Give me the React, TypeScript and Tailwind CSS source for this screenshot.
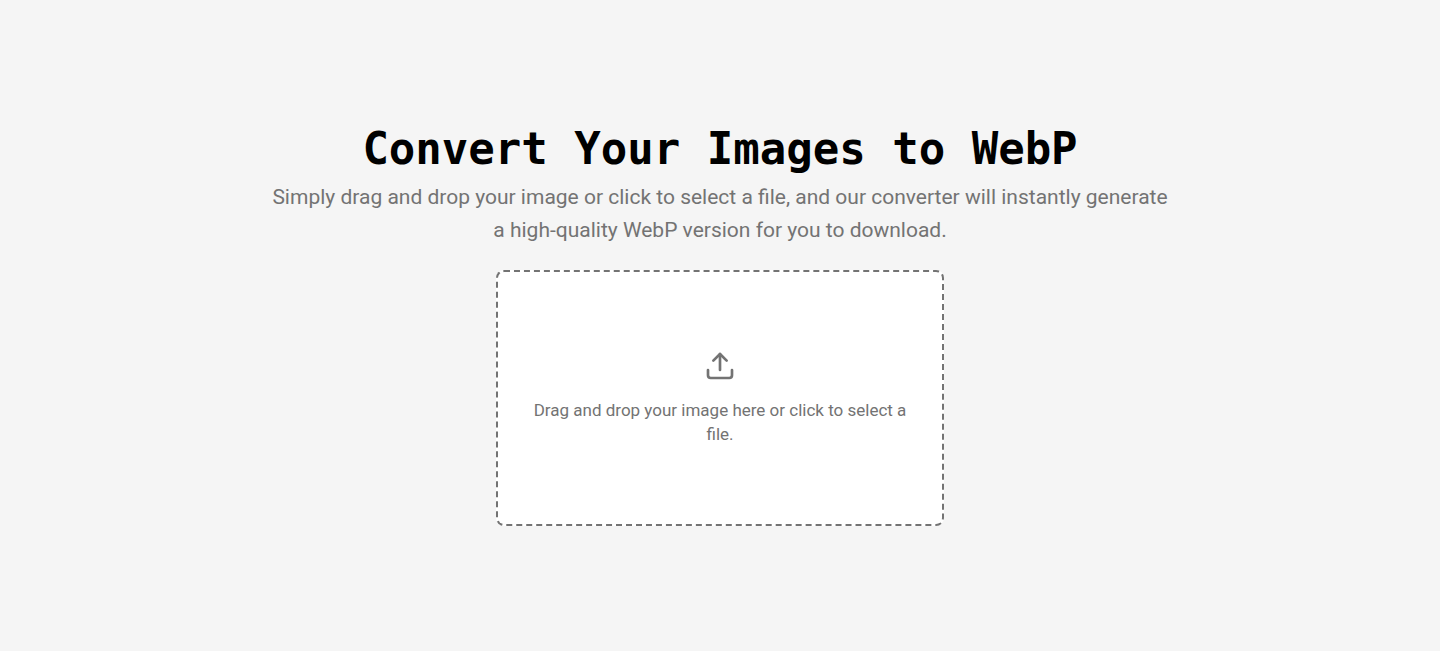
import { Upload } from "lucide-react";

export default function App() {
  return (
    <main className="flex min-h-screen flex-col items-center justify-center bg-neutral-100 px-4 text-center font-[Roboto,sans-serif] text-neutral-500">
      <h1 className="mb-2 font-['DejaVu_Sans_Mono',monospace] text-[44px] leading-[48px] font-bold text-black">
        Convert Your Images to WebP
      </h1>
      <p className="max-w-4xl text-[21px] leading-[33px]">
        Simply drag and drop your image or click to select a file, and our converter will instantly generate
        a high-quality WebP version for you to download.
      </p>
      <label className="mt-[23px] flex h-64 w-full max-w-md cursor-pointer flex-col items-center justify-center rounded-lg border-2 border-dashed border-neutral-500 bg-white px-8">
        <Upload className="size-8" aria-hidden="true" />
        <span className="mt-4 text-[17px] leading-6">Drag and drop your image here or click to select a file.</span>
        <input type="file" accept="image/*" className="sr-only" />
      </label>
    </main>
  );
}
